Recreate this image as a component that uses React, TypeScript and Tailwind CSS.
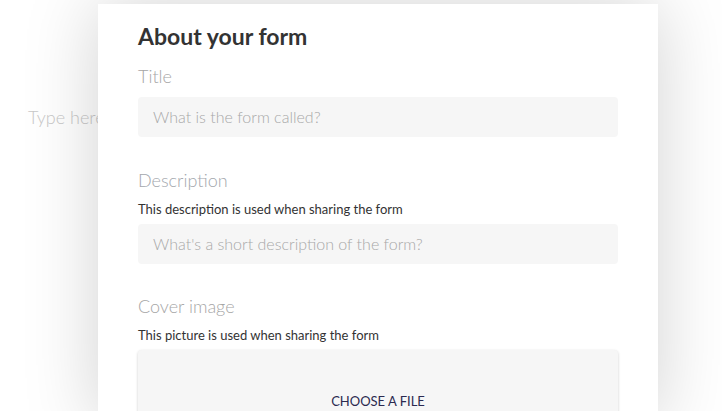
export default function App() {
  return (
    <div className="relative h-[411px] w-[722px] overflow-hidden bg-white font-['Lato',sans-serif]">
      {/* page behind the modal */}
      <div className="pl-[28px] pt-[104px] text-[18px] font-light text-[#c8c8c8]">Type here</div>

      {/* modal */}
      <div className="absolute left-[98px] top-[4px] h-[420px] w-[560px] bg-white px-10 shadow-[0_0_70px_rgba(0,0,0,0.18)]">
        <h2 className="pt-[17px] text-[23px] font-bold leading-[30px] text-[#333]">About your form</h2>

        <div className="mt-[13px] text-[18px] font-light leading-[24px] text-[#a6a6a6]">Title</div>
        <div className="mt-[9px] flex h-10 items-center rounded bg-[#f6f6f6] px-[15px] text-[16px] font-light text-[#a8a8a8]">
          What is the form called?
        </div>

        <div className="mt-[31px] text-[18px] font-light leading-[24px] text-[#a3a7ad]">Description</div>
        <div className="mt-[9px] text-[13px] leading-[16px] text-[#333]">This description is used when sharing the form</div>
        <div className="mt-[7px] flex h-10 items-center rounded bg-[#f6f6f6] px-[15px] text-[16px] font-light text-[#a8a8a8]">
          What's a short description of the form?
        </div>

        <div className="mt-[30px] text-[18px] font-light leading-[24px] text-[#a6a6a6]">Cover image</div>
        <div className="mt-[9px] text-[13px] leading-[16px] text-[#333]">This picture is used when sharing the form</div>
        <div className="mt-[7px] flex h-[110px] items-start justify-center rounded bg-[#f6f6f6] pt-[42px] text-[13px] uppercase text-[#2b2950] shadow-[0_1px_3px_rgba(0,0,0,0.2)]">
          Choose a file
        </div>
      </div>
    </div>
  );
}
